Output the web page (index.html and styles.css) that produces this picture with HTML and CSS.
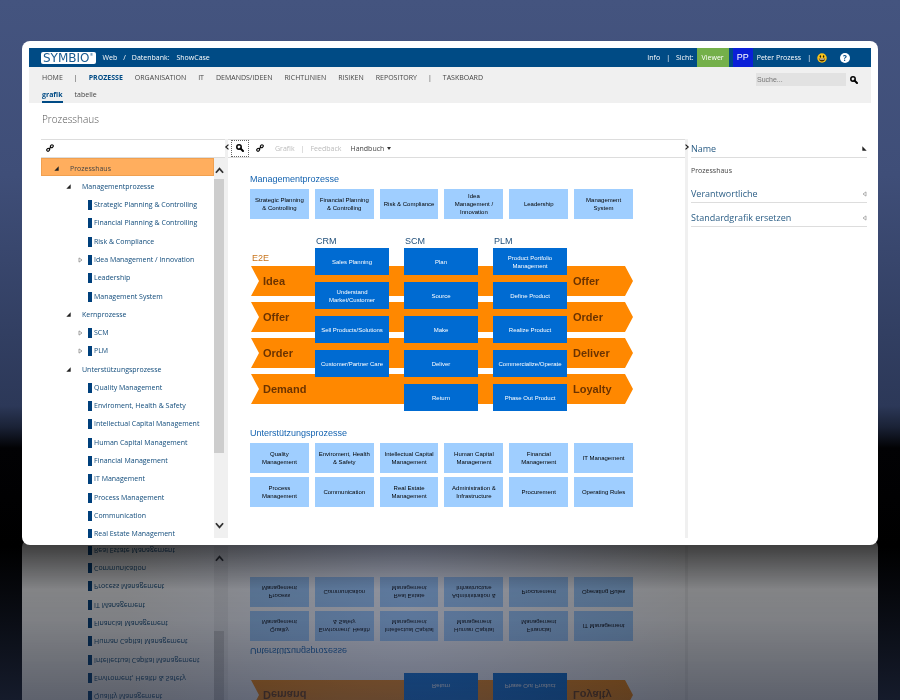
FILE: index.html
```html
<!DOCTYPE html>
<html lang="de">
<head>
  <meta charset="UTF-8" />
  <meta name="viewport" content="width=device-width, initial-scale=1.0" />
  <title>Symbio Web - Prozesshaus</title>
  <link rel="stylesheet" href="styles.css">
</head>
<body>
  <!-- shared icons -->
  <svg class="sprite" aria-hidden="true">
    <symbol id="icon-search" viewBox="0 0 16 16">
      <circle cx="6" cy="6" r="4.400" fill="none" stroke="currentColor" stroke-width="3" />
      <path d="M9 9l5 5" stroke="currentColor" stroke-width="4" stroke-linecap="round" />
    </symbol>
    <symbol id="icon-link" viewBox="0 0 16 16">
      <g fill="none" stroke="currentColor" stroke-width="2.2">
        <rect x="8.6" y="2" width="6" height="5" rx="2.4" transform="rotate(-45 11.6 4.5)" />
        <rect x="1.4" y="9" width="6" height="5" rx="2.4" transform="rotate(-45 4.4 11.5)" />
        <path d="M5.5 10.5l5-5" />
      </g>
    </symbol>
    <symbol id="icon-open" viewBox="0 0 8 8"><path d="M7.5 0.5v7h-7z" fill="currentColor" /></symbol>
    <symbol id="icon-closed" viewBox="0 0 8 10"><path d="M1.5 1.5L6.5 5l-5 3.5z" fill="none" stroke="currentColor" stroke-width="1.3" /></symbol>
    <symbol id="icon-chevron" viewBox="0 0 10 10"><path d="M1 7.5l4-4.5 4 4.5" fill="none" stroke="currentColor" stroke-width="2" /></symbol>
  </svg>

  <div class="window">
    <header class="topbar">
      <a class="logo" href="#">SYMBIO<sup>®</sup></a>
      <a class="crumb" href="#">Web</a>
      <span class="slash">/</span>
      <a href="#">Datenbank:</a>
      <a class="crumb" href="#">ShowCase</a>
      <div class="account">
        <a href="#">Info</a>
        <span class="bar">|</span>
        <span class="view-label">Sicht:</span>
        <button class="view" type="button">Viewer</button>
        <span class="avatar">PP</span>
        <a class="user" href="#">Peter Prozess</a>
        <span class="bar">|</span>
        <button class="round" type="button" aria-label="Feedback">
          <svg viewBox="0 0 20 20">
            <circle cx="10" cy="10" r="9.5" fill="#fbc51b" />
            <ellipse cx="6.8" cy="6.8" rx="1.4" ry="2.5" fill="#2b2200" />
            <ellipse cx="13.2" cy="6.8" rx="1.4" ry="2.5" fill="#2b2200" />
            <path d="M3.5 10.8h13c-.4 3.8-3 6-6.5 6s-6.100-2.200-6.500-6z" fill="#4a2c00" />
            <path d="M5 11.300h10v1.800H5z" fill="#fff" />
          </svg>
        </button>
        <button class="round help" type="button" aria-label="Hilfe">?</button>
      </div>
    </header>

    <div class="menu">
      <div>
        <nav class="main-nav">
          <a href="#">HOME</a>
          <span>|</span>
          <a class="active" href="#">PROZESSE</a>
          <a href="#">ORGANISATION</a>
          <a href="#">IT</a>
          <a href="#">DEMANDS/IDEEN</a>
          <a href="#">RICHTLINIEN</a>
          <a href="#">RISIKEN</a>
          <a href="#">REPOSITORY</a>
          <span>|</span>
          <a href="#">TASKBOARD</a>
        </nav>
        <nav class="sub-nav">
          <a class="active" href="#">grafik</a>
          <a href="#">tabelle</a>
        </nav>
      </div>
      <form class="search">
        <input type="text" placeholder="Suche..." aria-label="Suche">
        <button type="button" aria-label="Suchen"><svg><use href="#icon-search" /></svg></button>
      </form>
    </div>

    <h1>Prozesshaus</h1>

    <main class="workspace">
      <aside class="sidebar">
        <div class="toolbar">
          <button class="tool" type="button" aria-label="Link"><svg><use href="#icon-link" /></svg></button>
        </div>
        <div class="tree-box">
          <ul class="tree" id="tree"></ul>
          <div class="scrollbar">
            <button type="button" aria-label="Nach oben"><svg><use href="#icon-chevron" /></svg></button>
            <div class="track"><div class="thumb"></div></div>
            <button class="down" type="button" aria-label="Nach unten"><svg><use href="#icon-chevron" /></svg></button>
          </div>
        </div>
      </aside>

      <div class="splitter"><svg class="left"><use href="#icon-chevron" /></svg></div>

      <section class="content">
        <div class="toolbar">
          <button class="tool focus" type="button" aria-label="Zoom"><svg><use href="#icon-search" /></svg></button>
          <button class="tool" type="button" aria-label="Link"><svg><use href="#icon-link" /></svg></button>
          <button class="text-tool" type="button" disabled>Grafik</button>
          <span class="divider">|</span>
          <button class="text-tool" type="button" disabled>Feedback</button>
          <button class="text-tool" type="button">Handbuch <i class="caret"></i></button>
        </div>

        <div class="diagram">
          <h2>Managementprozesse</h2>
          <div class="tiles">
            <a href="#">Strategic Planning<br>&amp; Controlling</a>
            <a href="#">Financial Planning<br>&amp; Controlling</a>
            <a href="#">Risk &amp; Compliance</a>
            <a href="#">Idea<br>Management /<br>Innovation</a>
            <a href="#">Leadership</a>
            <a href="#">Management<br>System</a>
          </div>

          <div class="core">
            <div class="arrows">
              <h3>E2E</h3>
              <div class="arrow"><span>Idea</span><span>Offer</span></div>
              <div class="arrow"><span>Offer</span><span>Order</span></div>
              <div class="arrow"><span>Order</span><span>Deliver</span></div>
              <div class="arrow"><span>Demand</span><span>Loyalty</span></div>
            </div>
            <div class="columns">
              <div class="column">
                <h3>CRM</h3>
                <a href="#">Sales Planning</a>
                <a href="#">Understand<br>Market/Customer</a>
                <a href="#">Sell Products/Solutions</a>
                <a href="#">Customer/Partner Care</a>
              </div>
              <div class="column">
                <h3>SCM</h3>
                <a href="#">Plan</a>
                <a href="#">Source</a>
                <a href="#">Make</a>
                <a href="#">Deliver</a>
                <a href="#">Return</a>
              </div>
              <div class="column">
                <h3>PLM</h3>
                <a href="#">Product Portfolio<br>Management</a>
                <a href="#">Define Product</a>
                <a href="#">Realize Product</a>
                <a href="#">Commercialize/Operate</a>
                <a href="#">Phase Out Product</a>
              </div>
            </div>
          </div>

          <h2>Unterstützungsprozesse</h2>
          <div class="tiles">
            <a href="#">Quality<br>Management</a>
            <a href="#">Enviroment, Health<br>&amp; Safety</a>
            <a href="#">Intellectual Capital<br>Management</a>
            <a href="#">Human Capital<br>Management</a>
            <a href="#">Financial<br>Management</a>
            <a href="#">IT Management</a>
            <a href="#">Process<br>Management</a>
            <a href="#">Communication</a>
            <a href="#">Real Estate<br>Management</a>
            <a href="#">Administration &amp;<br>Infrastructure</a>
            <a href="#">Procurement</a>
            <a href="#">Operating Rules</a>
          </div>
        </div>
      </section>

      <div class="splitter"><svg class="right"><use href="#icon-chevron" /></svg></div>

      <aside class="details">
        <h2>Name <svg class="open"><use href="#icon-open" /></svg></h2>
        <p>Prozesshaus</p>
        <h2>Verantwortliche <svg><use href="#icon-closed" /></svg></h2>
        <h2>Standardgrafik ersetzen <svg><use href="#icon-closed" /></svg></h2>
      </aside>
    </main>
  </div>

  <script>
    // [level, label, state]
    const nodes = [
      [0, "Prozesshaus", "open"],
      [1, "Managementprozesse", "open"],
      [2, "Strategic Planning & Controlling"],
      [2, "Financial Planning & Controlling"],
      [2, "Risk & Compliance"],
      [2, "Idea Management / Innovation", "closed"],
      [2, "Leadership"],
      [2, "Management System"],
      [1, "Kernprozesse", "open"],
      [2, "SCM", "closed"],
      [2, "PLM", "closed"],
      [1, "Unterstützungsprozesse", "open"],
      [2, "Quality Management"],
      [2, "Enviroment, Health & Safety"],
      [2, "Intellectual Capital Management"],
      [2, "Human Capital Management"],
      [2, "Financial Management"],
      [2, "IT Management"],
      [2, "Process Management"],
      [2, "Communication"],
      [2, "Real Estate Management"],
    ];

    const tree = document.getElementById("tree");

    nodes.forEach(([level, label, state]) => {
      const item = document.createElement("li");
      item.className = `level-${level}`;
      if (state) {
        const toggle = document.createElement("button");
        toggle.type = "button";
        toggle.className = `toggle ${state}`;
        toggle.setAttribute("aria-label", label);
        toggle.innerHTML = `<svg><use href="#icon-${state}" /></svg>`;
        item.appendChild(toggle);
      } else {
        const blank = document.createElement("span");
        blank.className = "toggle";
        item.appendChild(blank);
      }
      const link = document.createElement("a");
      link.href = "#";
      link.textContent = label;
      item.appendChild(link);
      tree.appendChild(item);
    });
  </script>
</body>
</html>
```
FILE: styles.css
```css
* {
  box-sizing: border-box;
}

body {
  margin: 0;
  height: 100vh;
  overflow: hidden;
  padding: 41px 22px 0;
  background:
    radial-gradient(ellipse at 45% 86%, rgba(70, 88, 145, 0.35), transparent 40%),
    linear-gradient(#44547f 0%, #3f4e78 25%, #2c3858 58%, #1a2236 61%, #020204 64%, #000 78%, #151b2b 100%);
  font-family: "Open Sans", sans-serif;
  font-size: 7px;
  line-height: 10px;
  color: #444;
}

h1, h2, h3, p, ul {
  margin: 0;
  padding: 0;
  font-weight: normal;
}

a {
  color: inherit;
  text-decoration: none;
}

button {
  padding: 0;
  border: 0;
  background: none;
  font: inherit;
  color: inherit;
  cursor: pointer;
}

svg {
  display: block;
}

.sprite {
  position: absolute;
  width: 0;
  height: 0;
}

.window {
  display: flex;
  flex-direction: column;
  height: 72vh;
  padding: 7px;
  background: #fff;
  border-radius: 8px;
  -webkit-box-reflect: below -6px linear-gradient(transparent 50%, rgba(0, 0, 0, 0.3) 67%, rgba(0, 0, 0, 0.48) 84%, rgba(0, 0, 0, 0.5) 90%, rgba(0, 0, 0, 0.24) 99%);
}

/* top bar */
.topbar {
  display: flex;
  align-items: center;
  height: 19px;
  padding-left: 12px;
  background: #004b85;
  color: #fff;
}

.logo {
  display: flex;
  height: 12px;
  padding: 0 2px;
  background: #fff;
  border-radius: 2px;
  color: #1a5c91;
  font-family: "DejaVu Sans", sans-serif;
  font-size: 12px;
  line-height: 13px;
}

.logo sup {
  font-size: 4px;
  line-height: 6px;
}

.crumb {
  margin-left: 7px;
}

.slash {
  margin: 0 6px;
}

.account {
  display: flex;
  align-items: center;
  align-self: stretch;
  margin-left: auto;
  padding-right: 21px;
}

.bar {
  margin: 0 6px;
}

.view {
  align-self: stretch;
  margin: 0 4px 0 3px;
  padding: 0 5px;
  background: #74b04a;
}

.avatar {
  align-self: stretch;
  padding: 0 4px;
  margin-right: 4px;
  background: #0a1fd8;
  font-family: "Liberation Sans", sans-serif;
  font-size: 9px;
  line-height: 19px;
}

.round {
  width: 10px;
  height: 10px;
  margin-right: 13px;
}

.help {
  margin-right: 0;
  border-radius: 50%;
  background: #fff;
  color: #004b85;
  font-size: 8px;
  font-weight: bold;
}

/* menu */
.menu {
  display: flex;
  justify-content: space-between;
  height: 36px;
  padding: 6px 13px 0;
  background: #f0f0f0;
}

.main-nav {
  display: flex;
  gap: 12px;
}

.main-nav span {
  margin: 0 -1px;
}

.sub-nav {
  display: flex;
  gap: 12px;
  margin-top: 5px;
}

.sub-nav a {
  height: 15px;
  line-height: 13px;
}

.menu .active {
  color: #004b85;
  font-weight: bold;
}

.sub-nav .active {
  border-bottom: 2px solid #004b85;
}

.search {
  display: flex;
  gap: 4px;
  height: 13px;
  align-items: center;
}

.search input {
  width: 90px;
  height: 13px;
  padding: 0 1px;
  border: 0;
  background: #e2e2e2;
  font-family: "Liberation Sans", sans-serif;
  font-size: 7px;
}

.search svg {
  width: 8px;
  height: 8px;
  color: #000;
}

h1 {
  padding: 8px 13px 0;
  font-size: 10px;
  line-height: 16px;
  height: 36px;
  color: #555;
  font-weight: 300;
}

/* workspace */
.workspace {
  display: flex;
  flex: 1;
  min-height: 0;
  padding: 0 4px 0 12px;
}

.toolbar {
  display: flex;
  align-items: center;
  flex: none;
  height: 19px;
  border: 1px solid #ddd;
  border-width: 1px 0;
}

.tool {
  width: 18px;
  height: 17px;
  padding: 0 5px 2px;
  color: #000;
}

.tool svg {
  width: 8px;
  height: 8px;
}

.focus {
  margin-left: 3px;
  margin-right: 2px;
  border: 1px dotted #666;
  padding: 0 4px 2px;
}

.text-tool {
  margin-left: 6px;
}

.text-tool:disabled {
  color: #bbb;
}

.divider {
  margin-left: 6px;
  color: #bbb;
}

.text-tool:last-child {
  margin-left: 9px;
}

.caret {
  display: inline-block;
  vertical-align: middle;
  margin-left: 1px;
  border: 2px solid transparent;
  border-top: 3px solid #333;
  border-bottom: 0;
}

.splitter {
  flex: none;
  display: flex;
  justify-content: center;
  width: 3px;
  padding-top: 5px;
  background: #f0f0f0;
}

.splitter svg {
  flex: none;
  width: 6px;
  height: 6px;
  color: #222;
}

.splitter .left {
  transform: rotate(-90deg);
}

.splitter .right {
  transform: rotate(90deg);
}

/* tree */
.sidebar {
  display: flex;
  flex-direction: column;
  flex: none;
  width: 184px;
}

.tree-box {
  display: flex;
  flex: 1;
  min-height: 0;
  overflow: hidden;
}

.tree {
  display: grid;
  grid-auto-rows: 1fr;
  flex: 1;
  height: 101%;
  list-style: none;
  color: #0f4a7a;
}

.tree li {
  display: flex;
  align-items: center;
  padding-top: 3px;
}

.tree .level-0 {
  padding-left: 12px;
  background: #ffae5e;
  border: 1px solid #f0a050;
  color: #444;
}

.level-0 a {
  margin-left: 11px;
}

.level-1 {
  padding-left: 25px;
}

.level-1 a {
  margin-left: 11px;
}

.level-2 {
  padding-left: 37px;
}

.level-2 a {
  margin-left: 5px;
  padding-left: 2px;
  border-left: 4px solid #00407c;
}

.toggle {
  width: 5px;
  height: 8px;
}

.toggle svg {
  width: 5px;
  height: 6px;
}

.toggle.open {
  color: #222;
}

.toggle.open svg {
  height: 5px;
}

.toggle.closed {
  color: #888;
}

.scrollbar {
  display: flex;
  flex-direction: column;
  align-items: center;
  width: 11px;
  padding: 8px 0;
  background: #f0f0f0;
  color: #333;
}

.scrollbar svg {
  width: 9px;
  height: 9px;
}

.track {
  flex: 1;
  align-self: stretch;
  padding: 4px 1px 0 0;
}

.thumb {
  height: 80%;
  background: #cdcdcd;
}

.down {
  transform: rotate(180deg);
}

/* diagram */
.content {
  flex: 1;
  min-width: 0;
}

.diagram {
  padding: 15px 52px 0 22px;
  font-family: "Liberation Sans", sans-serif;
  font-size: 6px;
  line-height: 8px;
  text-align: center;
}

.diagram h2, .diagram h3 {
  font-size: 9px;
  line-height: 12px;
  text-align: left;
  color: #1463b0;
}

.tiles {
  display: grid;
  grid-template-columns: repeat(6, 1fr);
  gap: 4px 6px;
  margin-top: 4px;
}

.tiles a {
  display: flex;
  align-items: center;
  justify-content: center;
  height: 30px;
  background: #9fceff;
  color: #000;
}

.core {
  display: grid;
  margin: 16px 0 16px;
}

.arrows, .columns {
  grid-area: 1 / 1;
}

.arrows {
  display: flex;
  flex-direction: column;
  gap: 6px;
  padding-top: 17px;
}

.diagram .arrows h3 {
  margin: 0 0 -4px 2px;
  color: #c8741c;
}

.arrow {
  display: flex;
  justify-content: space-between;
  align-items: center;
  height: 30px;
  margin-left: 1px;
  padding-left: 12px;
  background: #ff8800;
  clip-path: polygon(0 0, calc(100% - 8px) 0, 100% 50%, calc(100% - 8px) 100%, 0 100%, 8px 50%);
  color: #6b3300;
  font-size: 11px;
  font-weight: bold;
}

.arrow span:last-child {
  width: 60px;
  text-align: left;
}

.columns {
  display: grid;
  grid-template-columns: repeat(3, 1fr);
  gap: 15px;
  padding: 0 66px 0 65px;
  z-index: 1;
}

.column {
  display: flex;
  flex-direction: column;
  gap: 7px;
}

.diagram .column h3 {
  margin: 0 0 -6px 1px;
  color: #1f4e79;
}

.column a {
  display: flex;
  align-items: center;
  justify-content: center;
  height: 27px;
  background: #006bd2;
  color: #fff;
}

/* details */
.details {
  flex: none;
  width: 179px;
  padding-left: 3px;
}

.details h2 {
  display: flex;
  justify-content: space-between;
  align-items: center;
  height: 24px;
  padding-top: 7px;
  border-bottom: 1px solid #ddd;
  font-size: 9px;
  color: #2a5d85;
}

.details h2:first-child {
  height: 19px;
  padding-top: 1px;
}

.details p {
  padding: 8px 0 3px;
}

.details svg {
  width: 5px;
  height: 6px;
  color: #999;
  transform: rotate(180deg);
}

.details .open {
  height: 5px;
  color: #222;
  transform: scaleX(-1);
}
```
